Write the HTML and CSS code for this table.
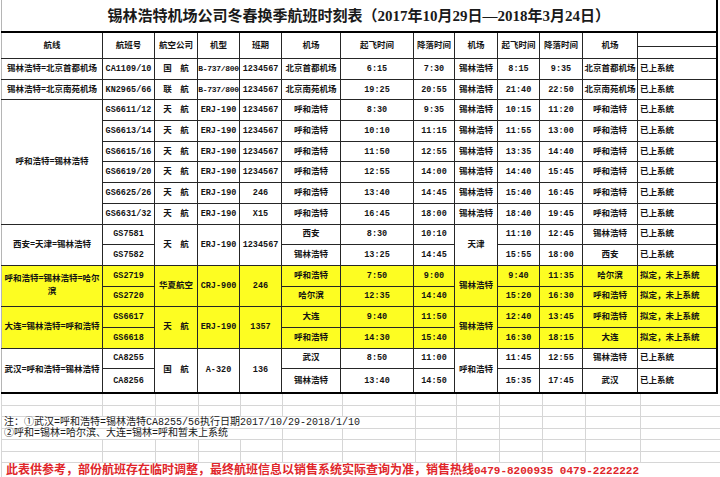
FILE: index.html
```html
<!DOCTYPE html>
<html lang="zh-CN">
<head>
<meta charset="utf-8">
<title>锡林浩特机场公司冬春换季航班时刻表</title>
<link rel="stylesheet" href="styles.css">
</head>
<body>
<table class="tt">
  <colgroup>
    <col class="w1"><col class="w2"><col class="w3"><col class="w4"><col class="w5"><col class="w6"><col class="w7"><col class="w8"><col class="w9"><col class="w10"><col class="w11"><col class="w12"><col class="w13">
  </colgroup>
  <tr class="title-row">
    <td colspan="13" class="title c1">锡林浩特机场公司冬春换季航班时刻表（2017年10月29日—2018年3月24日）</td>
  </tr>
  <tr class="head">
    <td class="c1">航线</td><td>航班号</td><td>航空公司</td><td>机型</td><td>班期</td><td>机场</td><td>起飞时间</td><td>降落时间</td><td>机场</td><td>起飞时间</td><td>降落时间</td><td>机场</td><td class="split"><div class="split-top"></div></td>
  </tr>
  <tr>
    <td class="c1 route">锡林浩特=北京首都机场</td><td>CA1109/10</td><td>国　航</td><td class="tight">B-737/800</td><td>1234567</td><td>北京首都机场</td><td>6:15</td><td>7:30</td><td>锡林浩特</td><td>8:15</td><td>9:35</td><td>北京首都机场</td><td class="s">已上系统</td>
  </tr>
  <tr>
    <td class="c1 route">锡林浩特=北京南苑机场</td><td>KN2965/66</td><td>联　航</td><td class="tight">B-737/800</td><td>1234567</td><td>北京南苑机场</td><td>19:25</td><td>20:55</td><td>锡林浩特</td><td>21:40</td><td>22:50</td><td>北京南苑机场</td><td class="s">已上系统</td>
  </tr>
  <tr>
    <td class="c1 route" rowspan="6">呼和浩特=锡林浩特</td><td>GS6611/12</td><td>天　航</td><td>ERJ-190</td><td>1234567</td><td>呼和浩特</td><td>8:30</td><td>9:35</td><td>锡林浩特</td><td>10:15</td><td>11:20</td><td>呼和浩特</td><td class="s">已上系统</td>
  </tr>
  <tr>
    <td>GS6613/14</td><td>天　航</td><td>ERJ-190</td><td>1234567</td><td>呼和浩特</td><td>10:10</td><td>11:15</td><td>锡林浩特</td><td>11:55</td><td>13:00</td><td>呼和浩特</td><td class="s">已上系统</td>
  </tr>
  <tr>
    <td>GS6615/16</td><td>天　航</td><td>ERJ-190</td><td>1234567</td><td>呼和浩特</td><td>11:50</td><td>12:55</td><td>锡林浩特</td><td>13:35</td><td>14:40</td><td>呼和浩特</td><td class="s">已上系统</td>
  </tr>
  <tr>
    <td>GS6619/20</td><td>天　航</td><td>ERJ-190</td><td>1234567</td><td>呼和浩特</td><td>12:55</td><td>14:00</td><td>锡林浩特</td><td>14:40</td><td>15:45</td><td>呼和浩特</td><td class="s">已上系统</td>
  </tr>
  <tr>
    <td>GS6625/26</td><td>天　航</td><td>ERJ-190</td><td>246</td><td>呼和浩特</td><td>13:40</td><td>14:45</td><td>锡林浩特</td><td>15:40</td><td>16:45</td><td>呼和浩特</td><td class="s">已上系统</td>
  </tr>
  <tr>
    <td>GS6631/32</td><td>天　航</td><td>ERJ-190</td><td>X15</td><td>呼和浩特</td><td>16:45</td><td>18:00</td><td>锡林浩特</td><td>18:40</td><td>19:45</td><td>呼和浩特</td><td class="s">已上系统</td>
  </tr>
  <tr>
    <td class="c1 route" rowspan="2">西安=天津=锡林浩特</td><td>GS7581</td><td rowspan="2">天　航</td><td rowspan="2">ERJ-190</td><td rowspan="2">1234567</td><td>西安</td><td>8:30</td><td>10:10</td><td rowspan="2">天津</td><td>11:10</td><td>12:45</td><td>锡林浩特</td><td class="s">已上系统</td>
  </tr>
  <tr>
    <td>GS7582</td><td>锡林浩特</td><td>13:25</td><td>14:45</td><td>15:55</td><td>18:00</td><td>西安</td><td class="s">已上系统</td>
  </tr>
  <tr class="y">
    <td class="c1 route wrap" rowspan="2">呼和浩特=锡林浩特=哈尔滨</td><td>GS2719</td><td rowspan="2">华夏航空</td><td rowspan="2">CRJ-900</td><td rowspan="2">246</td><td>呼和浩特</td><td>7:50</td><td>9:00</td><td rowspan="2">锡林浩特</td><td>9:40</td><td>11:35</td><td>哈尔滨</td><td class="s">拟定，未上系统</td>
  </tr>
  <tr class="y">
    <td>GS2720</td><td>哈尔滨</td><td>12:35</td><td>14:40</td><td>15:20</td><td>16:30</td><td>呼和浩特</td><td class="s">拟定，未上系统</td>
  </tr>
  <tr class="y">
    <td class="c1 route" rowspan="2">大连=锡林浩特=呼和浩特</td><td>GS6617</td><td rowspan="2">天　航</td><td rowspan="2">ERJ-190</td><td rowspan="2">1357</td><td>大连</td><td>9:40</td><td>11:50</td><td rowspan="2">锡林浩特</td><td>12:40</td><td>13:45</td><td>呼和浩特</td><td class="s">拟定，未上系统</td>
  </tr>
  <tr class="y">
    <td>GS6618</td><td>呼和浩特</td><td>14:30</td><td>15:40</td><td>16:30</td><td>18:15</td><td>大连</td><td class="s">拟定，未上系统</td>
  </tr>
  <tr>
    <td class="c1 route b" rowspan="2">武汉=呼和浩特=锡林浩特</td><td>CA8255</td><td class="b" rowspan="2">国　航</td><td class="b" rowspan="2">A-320</td><td class="b" rowspan="2">136</td><td>武汉</td><td>8:50</td><td>11:00</td><td class="b" rowspan="2">呼和浩特</td><td>11:45</td><td>12:55</td><td>锡林浩特</td><td class="s">已上系统</td>
  </tr>
  <tr class="last">
    <td>CA8256</td><td>锡林浩特</td><td>13:40</td><td>14:50</td><td>15:35</td><td>17:45</td><td>武汉</td><td class="s">已上系统</td>
  </tr>
</table>

<table class="sheet">
  <colgroup>
    <col class="w1"><col class="w2"><col class="w3"><col class="w4"><col class="w5"><col class="w6"><col class="w7"><col class="w8"><col class="w9"><col class="w10"><col class="w11"><col class="w12"><col class="w13">
  </colgroup>
  <tr class="first"><td></td><td></td><td></td><td></td><td></td><td></td><td></td><td></td><td></td><td></td><td></td><td></td><td></td></tr>
  <tr><td></td><td></td><td></td><td></td><td></td><td></td><td></td><td></td><td></td><td></td><td></td><td></td><td></td></tr>
  <tr><td colspan="7" class="note">注：①武汉=呼和浩特=锡林浩特CA8255/56执行日期2017/10/29-2018/1/10</td><td></td><td></td><td></td><td></td><td></td><td></td></tr>
  <tr><td colspan="5" class="note">②呼和=锡林=哈尔滨、大连=锡林=呼和暂未上系统</td><td></td><td></td><td></td><td></td><td></td><td></td><td></td><td></td></tr>
  <tr><td></td><td></td><td></td><td></td><td></td><td></td><td></td><td></td><td></td><td></td><td></td><td></td><td></td></tr>
  <tr><td></td><td></td><td></td><td></td><td></td><td></td><td></td><td></td><td></td><td></td><td></td><td></td><td></td></tr>
  <tr class="red-row"><td colspan="13" class="red">此表供参考，部份航班存在临时调整，最终航班信息以销售系统实际查询为准，销售热线<span class="tel">0479-8200935 0479-2222222</span></td></tr>
</table>
</body>
</html>
```

FILE: styles.css
```css
html, body {
  margin: 0;
  padding: 0;
  background: #ffffff;
  width: 720px;
  height: 477px;
  overflow: hidden;
}

body {
  font-family: "Liberation Mono", "Noto Sans CJK SC", monospace;
  color: #141414;
}

.w1 { width: 101px; }
.w2 { width: 52px; }
.w3 { width: 43px; }
.w4 { width: 42px; }
.w5 { width: 42px; }
.w6 { width: 59px; }
.w7 { width: 73px; }
.w8 { width: 41px; }
.w9 { width: 43px; }
.w10 { width: 42px; }
.w11 { width: 43px; }
.w12 { width: 55px; }
.w13 { width: 79px; }

.tt {
  border-collapse: collapse;
  table-layout: fixed;
  width: 715px;
  margin-left: 1px;
}

.tt td {
  border: 1px solid #262626;
  padding: 0 1px;
  text-align: center;
  vertical-align: middle;
  font-size: 8.5px;
  font-weight: 700;
  line-height: 12px;
  white-space: nowrap;
  overflow: hidden;
  height: 19.7px;
}

.tt td.tight {
  padding: 0;
  font-size: 8px;
  letter-spacing: -0.3px;
}

.tt tr > td:last-child {
  border-right: 2px solid #000;
}

.tt td.c1 {
  border-left: 1px solid #b5b5b5;
}

.tt .title-row td {
  height: 31px;
  border-top: none;
  border-bottom: 2px solid #000;
  font-family: "Liberation Serif", "Noto Sans CJK SC", serif;
  font-size: 15px;
  font-weight: 700;
  line-height: 20px;
  color: #1a1a1a;
  padding: 0;
}

.tt .head td {
  height: 25px;
}

.tt td.split {
  padding: 0;
  vertical-align: top;
}

.split-top {
  height: 13px;
  border-bottom: 1px solid #262626;
}

.tt td.route {
  white-space: normal;
}

.tt td.wrap {
  line-height: 13px;
}

.tt td.s {
  text-align: left;
  padding-left: 2px;
}

.tt tr.y td {
  background: #fdfd22;
}

.tt tr.last td,
.tt td.b {
  border-bottom: 2px solid #000;
}

.tt tr.last td {
  height: 23px;
}

.sheet {
  border-collapse: collapse;
  table-layout: fixed;
  width: 719px;
  margin-left: 1px;
}

.sheet td {
  border: 1px solid #d6d6d6;
  height: 10.5px;
  padding: 0;
  font-size: 10px;
  line-height: 10px;
}

.sheet tr.first td {
  border-top: none;
}

.sheet tr > td:last-child {
  border-right: none;
}

.sheet td.note {
  background: #ffffff;
  white-space: nowrap;
  text-align: left;
  padding-left: 2px;
  color: #1a1a1a;
}

.sheet tr.red-row td {
  height: 16px;
}

.sheet td.red {
  background: #ffffff;
  white-space: nowrap;
  text-align: left;
  padding-left: 4px;
  color: #e0262a;
  font-size: 12px;
  font-weight: 700;
  line-height: 14px;
  vertical-align: top;
  padding-top: 1px;
}

.sheet td.red .tel {
  font-size: 11px;
}
```
